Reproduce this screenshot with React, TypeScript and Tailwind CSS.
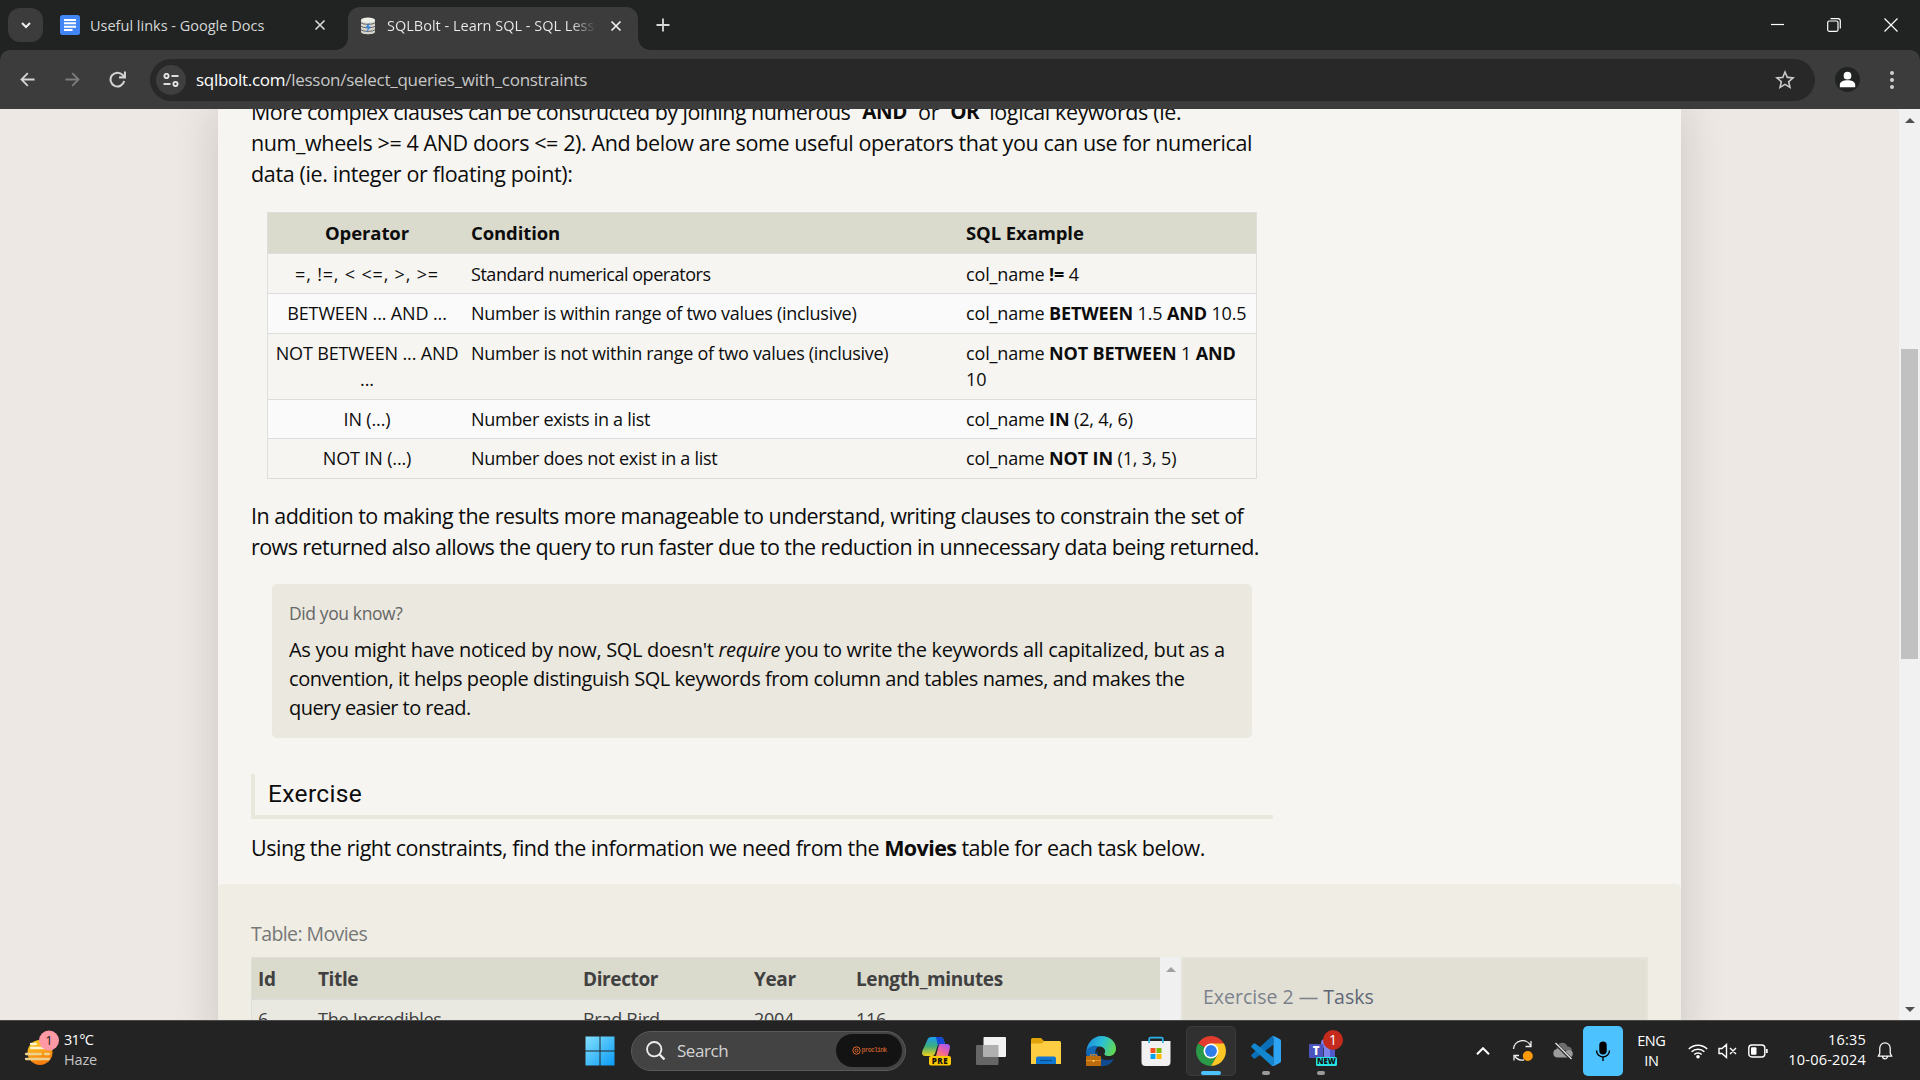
import React from "react";

type Cell = React.ReactNode;

const operators: { op: Cell; cond: Cell; ex: Cell; height: string }[] = [
  {
    op: <span className="tracking-[0.82px]">=, !=, &lt; &lt;=, &gt;, &gt;=</span>,
    cond: <span className="tracking-[-0.46px]">Standard numerical operators</span>,
    ex: (<>col_name <b>!=</b> 4</>),
    height: "h-[40px] pt-[7px]",
  },
  {
    op: "BETWEEN ... AND ...",
    cond: "Number is within range of two values (inclusive)",
    ex: (<>col_name <b>BETWEEN</b> 1.5 <b>AND</b> 10.5</>),
    height: "h-[40px] pt-[6px] bg-[#fafafa]",
  },
  {
    op: (<>NOT BETWEEN ... AND<br />...</>),
    cond: "Number is not within range of two values (inclusive)",
    ex: (<>col_name <b>NOT BETWEEN</b> 1 <b>AND</b><br />10</>),
    height: "h-[66px] pt-[6px]",
  },
  {
    op: "IN (...)",
    cond: "Number exists in a list",
    ex: (<>col_name <b>IN</b> (2, 4, 6)</>),
    height: "h-[39px] pt-[6px] bg-[#fafafa]",
  },
  {
    op: "NOT IN (...)",
    cond: "Number does not exist in a list",
    ex: (<>col_name <b>NOT IN</b> (1, 3, 5)</>),
    height: "h-[39px] pt-[6px]",
  },
];

function CloseGlyph({ className }: { className?: string }) {
  return (
    <svg viewBox="0 0 12 12" className={className} fill="none" stroke="currentColor" strokeWidth="1.7">
      <path d="M1.5 1.5l9 9M10.5 1.5l-9 9" />
    </svg>
  );
}

function TabStrip() {
  return (
    <div className="flex h-[50px] shrink-0 items-end bg-[#202322] text-[14.5px] text-[#d5d7d6]">
      <div className="mb-[8px] ml-[8px] flex h-[34px] w-[35px] items-center justify-center rounded-[12px] bg-[#3c3c3c]">
        <svg viewBox="0 0 12 12" className="size-[12px]" fill="none" stroke="#f0f0f0" strokeWidth="2">
          <path d="M2 4l4 4 4-4" />
        </svg>
      </div>
      <div className="ml-[17px] flex h-[50px] w-[276px] items-center">
        <svg viewBox="0 0 20 20" className="size-[20px]">
          <rect width="20" height="20" rx="2.5" fill="#4285f4" />
          <path d="M4 5h12M4 8.3h12M4 11.7h12M4 15h8.500" stroke="#fff" strokeWidth="2" />
        </svg>
        <span className="mt-px ml-[10px] flex-1 whitespace-nowrap">Useful links - Google Docs</span>
        <CloseGlyph className="mr-[10px] size-[12px] text-[#d5d7d6]" />
      </div>
      <div className="flex items-end">
        <div className="h-[12px] w-[12px] bg-[radial-gradient(circle_at_0_0,#202322_11.5px,#3c3c3c_12px)]" />
        <div className="flex h-[43px] w-[290px] items-center rounded-t-[12px] bg-[#3c3c3c] pb-[6px] text-[#eceeed]">
          <svg viewBox="0 0 16 18" className="ml-[12px] h-[18px] w-[16px]">
            <path d="M1 3v12c0 3 14 3 14 0V3z" fill="#d4d4cf" />
            <ellipse cx="8" cy="3.200" rx="7" ry="2.600" fill="#eeeee8" />
            <path d="M1 5.500c1 2.400 13 2.400 14 0M1 9c1 2.400 13 2.400 14 0M1 12.500c1 2.400 13 2.400 14 0" fill="none" stroke="#5a5f63" strokeWidth="1" />
            <path d="M9.500 5.500L5.500 10.500h2.500L6.500 15l4.500-5.500H8.500z" fill="#2a7fe0" />
          </svg>
          <span className="ml-[11px] w-[209px] overflow-hidden bg-[linear-gradient(90deg,#eceeed_88%,#3c3c3c)] bg-clip-text whitespace-nowrap text-transparent">
            SQLBolt - Learn SQL - SQL Lesson 2
          </span>
          <CloseGlyph className="ml-[14px] size-[12px] text-[#f0f0f0]" />
        </div>
        <div className="h-[12px] w-[12px] bg-[radial-gradient(circle_at_100%_0,#202322_11.5px,#3c3c3c_12px)]" />
      </div>
      <svg viewBox="0 0 14 14" className="mb-[18px] ml-[6px] size-[14px]" fill="none" stroke="#d8d8d8" strokeWidth="1.8">
        <path d="M7 0.500v13M0.500 7h13" />
      </svg>
      <div className="flex-1" />
      <div className="flex h-[50px] items-center gap-[43px] pr-[22px]">
        <svg viewBox="0 0 14 14" className="size-[14px]" stroke="#fff" strokeWidth="1.2"><path d="M1 6.500h13" /></svg>
        <svg viewBox="0 0 14 14" className="size-[14px]" fill="none" stroke="#fff" strokeWidth="1.2">
          <rect x="0.700" y="3" width="10.300" height="10.300" rx="1.500" />
          <path d="M3.500 0.700h7.500a2.300 2.300 0 0 1 2.300 2.300v7.500" />
        </svg>
        <svg viewBox="0 0 14 14" className="size-[14px]" fill="none" stroke="#fff" strokeWidth="1.2"><path d="M0.500 0.500l13 13M13.500 0.500l-13 13" /></svg>
      </div>
    </div>
  );
}

function Toolbar() {
  return (
    <div className="flex h-[59px] shrink-0 bg-[#202322]">
      <div className="flex w-full items-center rounded-t-[10px] bg-[#3c3c3c]">
        <svg viewBox="0 0 16 16" className="ml-[20px] size-[15px]" fill="none" stroke="#d4d4d4" strokeWidth="1.9"><path d="M15.500 8H1.800M8.300 1.300L1.600 8l6.700 6.700" /></svg>
        <svg viewBox="0 0 16 16" className="ml-[30px] size-[15px]" fill="none" stroke="#7d7d7d" strokeWidth="1.9"><path d="M0.500 8h13.700M7.700 1.300L14.400 8l-6.700 6.700" /></svg>
        <svg viewBox="0 0 16 16" className="ml-[29px] size-[17px]" fill="none" stroke="#d4d4d4" strokeWidth="1.9">
          <path d="M14.300 9.500A6.500 6.500 0 1 1 12.800 3.700L14.500 5.600" />
          <path d="M15 0.500V6H9.500" />
        </svg>
        <div className="ml-[24px] flex h-[42px] w-[1665px] items-center rounded-full bg-[#282828] pl-[6px]">
          <div className="flex size-[30px] items-center justify-center rounded-full bg-[#3f3f3f]">
            <svg viewBox="0 0 16 14" className="h-[14px] w-[16px]" fill="none" stroke="#e6e6e6" strokeWidth="1.9">
              <circle cx="3.500" cy="3" r="2.100" /><path d="M8.500 3h7" />
              <circle cx="12.500" cy="11" r="2.100" /><path d="M0.500 11h7" />
            </svg>
          </div>
          <div className="ml-[10px] flex-1 text-[17px] font-[370] tracking-[-0.28px] text-[#c7c7c7]">
            <span className="text-white">sqlbolt.com</span>/lesson/select_queries_with_constraints
          </div>
          <svg viewBox="0 0 24 24" className="mr-[18px] size-[24px]" fill="#c9c9c9">
            <path d="M22 9.240l-7.190-.62L12 2 9.190 8.630 2 9.240l5.460 4.730L5.820 21 12 17.270 18.180 21l-1.630-7.030L22 9.240zM12 15.400l-3.760 2.270 1-4.280-3.320-2.880 4.380-.38L12 6.100l1.710 4.040 4.380.38-3.320 2.880 1 4.280L12 15.400z" />
          </svg>
        </div>
        <svg viewBox="0 0 26 26" className="ml-[20px] size-[25px]">
          <circle cx="13" cy="13" r="13" fill="#202322" />
          <circle cx="13" cy="9" r="4" fill="#fff" />
          <path d="M5 21v-2.500c0-3.200 4-4.700 8-4.700s8 1.500 8 4.700V21z" fill="#fff" />
        </svg>
        <svg viewBox="0 0 4 20" className="ml-[30px] h-[20px] w-[4px]" fill="#cfcfcf">
          <circle cx="2" cy="3" r="2" /><circle cx="2" cy="10" r="2" /><circle cx="2" cy="17" r="2" />
        </svg>
      </div>
    </div>
  );
}

function OperatorTable() {
  return (
    <div className="mt-[23px] ml-[16px] w-[990px] border border-[#dedede] text-[18px] leading-[26px] font-[370] tracking-[-0.14px]">
      <div className="grid h-[41px] grid-cols-[198px_494px_1fr] items-center border-b border-[#dedede] bg-[#dadacd] text-[18.5px] font-bold tracking-[-0.1px]">
        <div className="text-center">Operator</div>
        <div className="pl-[5px]">Condition</div>
        <div className="pl-[6px]">SQL Example</div>
      </div>
      {operators.map((row, i) => (
        <div key={i} className={`grid grid-cols-[198px_494px_1fr] border-b border-[#dcdddd] whitespace-nowrap last:border-b-0 ${row.height}`}>
          <div className="text-center">{row.op}</div>
          <div className="pl-[5px] tracking-[-0.29px]">{row.cond}</div>
          <div className="pl-[6px]">{row.ex}</div>
        </div>
      ))}
    </div>
  );
}

function Lesson() {
  return (
    <div className="h-[940px] w-[1463px] shrink-0 bg-[#f6f5f1] shadow-[0_0_42px_rgba(40,20,20,0.16)]">
      <div className="flex h-[775px] flex-col pl-[33px] text-[21.5px] leading-[31.2px] font-[370] whitespace-nowrap text-[#0c0c0c]">
        <div className="-mt-[13px] h-[93px] shrink-0">
          <div className="flex">
            <span className="tracking-[-0.54px]">More complex clauses can be constructed by joining numerous</span>
            <b className="ml-[12px] text-[20.5px] tracking-[-0.4px]">AND</b>
            <span className="ml-[11px] tracking-[-0.3px]">or</span>
            <b className="ml-[11px] text-[20.5px] tracking-[-0.4px]">OR</b>
            <span className="ml-[10px] tracking-[-0.37px]">logical keywords (ie.</span>
          </div>
          <div className="tracking-[-0.4px]">num_wheels &gt;= 4 AND doors &lt;= 2). And below are some useful operators that you can use for numerical</div>
          <div className="tracking-[-0.35px]">data (ie. integer or floating point):</div>
        </div>
        <OperatorTable />
        <div className="mt-[21px]">
          <div className="tracking-[-0.51px]">In addition to making the results more manageable to understand, writing clauses to constrain the set of</div>
          <div className="tracking-[-0.57px]">rows returned also allows the query to run faster due to the reduction in unnecessary data being returned.</div>
        </div>
        <div className="mt-[22px] ml-[21px] h-[154px] w-[980px] shrink-0 rounded-[5px] bg-[#eae8df] pt-[15px] pl-[17px] text-[20px] leading-[29.200px]">
          <div className="mb-[6px] text-[17.5px] tracking-[-0.39px] text-[#666]">Did you know?</div>
          <div className="tracking-[-0.32px]">As you might have noticed by now, SQL doesn't <i>require</i> you to write the keywords all capitalized, but as a</div>
          <div className="tracking-[-0.44px]">convention, it helps people distinguish SQL keywords from column and tables names, and makes the</div>
          <div className="tracking-[-0.54px]">query easier to read.</div>
        </div>
        <div className="mt-[36px] h-[45px] w-[1022px] shrink-0 border-b-4 border-l-4 border-[#e8e8dc] pl-[13px] font-['Roboto'] text-[24.5px] leading-[40px] font-[380] tracking-[0.35px]">
          Exercise
        </div>
        <div className="mt-[13px] tracking-[-0.49px]">
          Using the right constraints, find the information we need from the <b className="tracking-[-0.6px]">Movies</b> table for each task below.
        </div>
      </div>
      <div className="h-[165px] rounded-t-[5px] bg-[#efede4] px-[33px] pt-[35px]">
        <div className="h-[38px] text-[19.5px] leading-[30px] font-[370] tracking-[-0.58px] text-[#777]">Table: Movies</div>
        <div className="flex">
          <div className="w-[909px] border border-r-0 border-[#dfdfda] text-[#404040]">
            <div className="grid h-[42px] grid-cols-[60px_265px_171px_102px_1fr] items-center border-b-2 border-[#dcdcd6] bg-[#dadacd] pt-[3px] pl-[6px] text-[19px] font-bold tracking-[-0.38px]">
              <span>Id</span><span>Title</span><span>Director</span><span>Year</span><span>Length_minutes</span>
            </div>
            <div className="grid h-[60px] grid-cols-[60px_265px_171px_102px_1fr] bg-[#e9e9e1] pt-[6px] pl-[6px] text-[18px] leading-[26px] font-[370] tracking-[-0.27px]">
              <span>6</span><span>The Incredibles</span><span>Brad Bird</span><span>2004</span><span>116</span>
            </div>
          </div>
          <div className="flex w-[21px] justify-center bg-[#f0f0f0] pt-[10px]">
            <svg viewBox="0 0 10 5" className="h-[5px] w-[10px]" fill="#a0a0a0"><path d="M0 5L5 0l5 5z" /></svg>
          </div>
          <div className="w-[467px] border-2 border-[#e5e4da] bg-[#e2e0d5] pt-[23px] pl-[20px] text-[19.5px] leading-[30px] font-[370] text-[#7c828d]">
            Exercise 2 — <span className="text-[#5f6675]">Tasks</span>
          </div>
        </div>
      </div>
    </div>
  );
}

function TaskIcons() {
  return (
    <div className="flex items-center">
      <div className="flex w-[55px] justify-center">
        <svg viewBox="0 0 30 30" className="size-[30px]">
          <defs>
            <linearGradient id="cpA" x1="0" y1="0" x2="0" y2="1"><stop offset="0" stopColor="#1c9cf0" /><stop offset="0.5" stopColor="#3fae7a" /><stop offset="1" stopColor="#f2d21b" /></linearGradient>
            <linearGradient id="cpB" x1="0.8" y1="0" x2="0.2" y2="1"><stop offset="0" stopColor="#a259f7" /><stop offset="0.6" stopColor="#f0609e" /><stop offset="1" stopColor="#fb8a5c" /></linearGradient>
          </defs>
          <path d="M7 2.500Q8 1 10 1h9.500q2.500 0 3.200 2.500L24 8h-5q-2 0-2.700 2.500L14 17.500q-.8 2.500-3 2.500H4.500Q0 20 1.300 15z" fill="url(#cpA)" />
          <path d="M15 1h4.500q2.500 0 3.200 2.500L24 8h-5q-1.500 0-2.200 1.500z" fill="#1549d8" />
          <path d="M19 8h6.500Q30 8 28.700 13l-1.900 7H15l2.500-9.500Q18 8 19 8z" fill="url(#cpB)" />
          <rect x="8" y="20" width="22" height="9.500" rx="2" fill="#fcc800" />
          <text x="19" y="27.700" textAnchor="middle" fontSize="8" fontWeight="800" fontFamily="Open Sans" letterSpacing="0.5" fill="#111">PRE</text>
        </svg>
      </div>
      <div className="flex w-[55px] justify-center">
        <svg viewBox="0 0 30 30" className="size-[30px]">
          <rect x="0" y="9" width="22.500" height="20" rx="1" fill="#666" />
          <rect x="7.500" y="1" width="22.500" height="20" rx="1" fill="#f2f2f2" />
          <rect x="7.500" y="9" width="15" height="12" fill="#b0b0b0" />
        </svg>
      </div>
      <div className="flex w-[55px] justify-center">
        <svg viewBox="0 0 30 30" className="size-[30px]">
          <path d="M0 3.500Q0 2 1.500 2h8.500l3.500 3.500V10H0z" fill="#e0a30a" />
          <path d="M0 7.500h10.500L13.500 5H28.500Q30 5 30 6.500V28H0z" fill="#ffcd42" />
          <path d="M5 28v-5.500q0-2 2-2h16q2 0 2 2V28z" fill="#0f77cf" />
          <path d="M9 24.500h12" stroke="#0a4f92" strokeWidth="1.200" />
        </svg>
      </div>
      <div className="flex w-[55px] justify-center">
        <svg viewBox="0 0 30 30" className="size-[30px]">
          <defs><linearGradient id="edA" x1="0" y1="0.3" x2="1" y2="0.6"><stop offset="0" stopColor="#1c8fdf" /><stop offset="0.5" stopColor="#2cc0d4" /><stop offset="1" stopColor="#63d94f" /></linearGradient></defs>
          <path d="M0.500 17C0 8 6.500 0 15.500 0 24 0 30 6 30 12.500c0 5-3.500 7.500-7 7.500-4 0-5-1.500-4.500-2.500 2-3-0.500-7-5-7C8 10.500 2 13 0.500 17z" fill="url(#edA)" />
          <path d="M0 16C1.500 10.500 8 8.500 12.500 10.500c-4 2-4 8-1 12 3.500 4.500 10 5.500 16 1C25 28 20 30 15.500 30 6 30 0 23.500 0 16z" fill="#1467b5" />
          <path d="M11.500 14c-1 4 2 9 8 10 3 .5 6-.3 8-.7C25 28 20 30 16 30c-6-3-8-9-4.500-16z" fill="#0f4a91" />
          <rect x="0" y="20" width="15" height="10" rx="0.800" fill="#bd6c0d" />
          <path d="M4.500 20v-1.200h6V20M0 24.500h15" fill="none" stroke="#e58f1e" />
          <circle cx="7.500" cy="25" r="1" fill="#ffd877" />
        </svg>
      </div>
      <div className="flex w-[55px] justify-center">
        <svg viewBox="0 0 30 30" className="size-[30px]">
          <path d="M0.500 5h29v21q0 4-4 4h-21q-4 0-4-4z" fill="#f1f1f1" />
          <path d="M8.200 7V3q0-1.300 1.300-1.300h11Q21.800 1.700 21.800 3v4" fill="none" stroke="#2bb3ea" strokeWidth="1.700" />
          <path d="M9.500 12h5v5h-5z" fill="#f25022" /><path d="M15.500 12h5v5h-5z" fill="#7fba00" />
          <path d="M9.500 18h5v5h-5z" fill="#00a4ef" /><path d="M15.500 18h5v5h-5z" fill="#ffb900" />
        </svg>
      </div>
      <div className="flex w-[55px] justify-center">
        <div className="flex h-[50px] w-[50px] flex-col items-center rounded-[5px] border border-[#3b3b3b] bg-[#303030] pt-[9px]">
          <svg viewBox="0 0 30 30" className="size-[30px] shrink-0">
            <path d="M15 15L2.010 7.500A15 15 0 0 1 27.990 7.500z" fill="#e33b2e" />
            <path d="M15 15H15L2.010 7.500A15 15 0 0 0 15 30L21.500 18.750z" fill="#2a9a48" />
            <path d="M15 7.500H27.990A15 15 0 0 1 15 30L21.500 18.750z" fill="#fcc625" />
            <circle cx="15" cy="15" r="7.500" fill="#fff" />
            <circle cx="15" cy="15" r="5.900" fill="#2f7de9" />
          </svg>
          <div className="mt-[5px] h-[4px] w-[20px] shrink-0 rounded-full bg-[#4cc2ff]" />
        </div>
      </div>
      <div className="flex w-[55px] flex-col items-center pt-[10px]">
        <svg viewBox="0 0 30 30" className="size-[30px]">
          <path d="M22.500 0v8.500L4.500 22.300q-1 .7-1.900 0L.7 20.600q-1-1 0-2L20.500 .6z" fill="#0a6fb8" />
          <path d="M22.500 30v-8.500L4.500 7.700q-1-.7-1.900 0L.7 9.400q-1 1 0 2L20.500 29.400z" fill="#1287d0" />
          <path d="M20.500 29.400q1.200.9 2.800.3l5.400-2.700q1.300-.7 1.300-2V5q0-1.300-1.300-2L23.300.3Q21.700-.3 20.500.6q2-.7 2 1.400v26q0 2-2 1.400z" fill="#2ca3f3" />
        </svg>
        <div className="mt-[5px] h-[4px] w-[8px] rounded-full bg-[#9a9a9a]" />
      </div>
      <div className="flex w-[55px] flex-col items-center pt-[4px]">
        <svg viewBox="0 0 36 36" className="ml-[10px] h-[36px] w-[36px]">
          <rect x="13" y="9" width="9" height="9" rx="4" fill="#7b83eb" />
          <path d="M16 14h11v10q0 6-6 6h-5z" fill="#7b83eb" />
          <path d="M22 14h5v14h-5z" fill="#5059c9" />
          <rect x="1" y="14" width="14.500" height="14" rx="1" fill="#4b53bc" />
          <text x="8.200" y="25" textAnchor="middle" fontSize="11.500" fontWeight="800" fontFamily="Open Sans" fill="#fff">T</text>
          <circle cx="25" cy="10" r="10" fill="#c42b1c" />
          <text x="25" y="15" textAnchor="middle" fontSize="14" fontFamily="Open Sans" fill="#fff">1</text>
          <rect x="8" y="27" width="21" height="9" rx="1.500" fill="#27e4e4" />
          <text x="18.500" y="34.300" textAnchor="middle" fontSize="7.800" fontWeight="800" fontFamily="Open Sans" fill="#111">NEW</text>
        </svg>
        <div className="mt-[5px] h-[4px] w-[8px] rounded-full bg-[#9a9a9a]" />
      </div>
    </div>
  );
}

function Taskbar() {
  return (
    <div className="flex h-[60px] shrink-0 items-center border-t border-[#4b4b4b] bg-[#232323] text-[14.5px] leading-[20px] text-white">
      <svg viewBox="0 0 36 36" className="-mt-[6px] ml-[24px] size-[36px]">
        <defs><linearGradient id="sun" x1="0" y1="0" x2="0.3" y2="1"><stop offset="0" stopColor="#ffd21f" /><stop offset="1" stopColor="#f57c10" /></linearGradient></defs>
        <circle cx="16" cy="22.500" r="12.500" fill="url(#sun)" />
        <path d="M7 14h5M7 18h15" stroke="#fff3cf" strokeWidth="2.300" strokeLinecap="round" />
        <path d="M2 24h15M21 24h4M2 29h23" stroke="#eed18f" strokeWidth="2.300" strokeLinecap="round" />
        <circle cx="25" cy="10.500" r="10" fill="#ff99a4" />
        <text x="25" y="15" textAnchor="middle" fontSize="13" fontFamily="Open Sans" fill="#222">1</text>
      </svg>
      <div className="-mt-[2px] ml-[4px] w-[522px]">
        <div className="tracking-[-0.7px]">31°C</div>
        <div className="tracking-[-0.17px] text-[#c4c4c4]">Haze</div>
      </div>
      <svg viewBox="0 0 30 30" className="-ml-[1px] size-[30px]">
        <defs><linearGradient id="win" x1="0" y1="0" x2="1" y2="1"><stop offset="0" stopColor="#83e0fd" /><stop offset="1" stopColor="#0a9bf5" /></linearGradient></defs>
        <path d="M.5 .5h14v14H.5zM15.500 .5h14v14h-14zM.5 15.500h14v14H.5zM15.500 15.500h14v14h-14z" fill="url(#win)" />
      </svg>
      <div className="ml-[16px] flex h-[40px] w-[275px] items-center rounded-full border border-[#5a5a5a] bg-[#434343] pr-[3px] pl-[14px]">
        <svg viewBox="0 0 18 18" className="size-[19px]" fill="none" stroke="#ececec" strokeWidth="1.800">
          <circle cx="7.800" cy="7.800" r="6.800" /><path d="M12.600 12.600L17.500 17.500" strokeWidth="2.200" />
        </svg>
        <span className="ml-[12px] flex-1 text-[17px] tracking-[-0.45px] text-[#d4d4d4]">Search</span>
        <span className="flex h-[33px] w-[66px] items-center justify-center gap-[1px] rounded-full bg-[#131313]">
          <svg viewBox="0 0 9 9" className="size-[9px]" fill="none" stroke="#e0672a">
            <circle cx="4.500" cy="4.500" r="3.700" strokeWidth="1" /><circle cx="4.500" cy="4.500" r="1.500" strokeWidth="1" />
          </svg>
          <span className="font-mono text-[6.500px] font-bold tracking-[-0.8px] text-[#b4552a]">proclink</span>
        </span>
      </div>
      <div className="ml-[2px] flex h-[60px] items-center"><TaskIcons /></div>
      <div className="flex-1" />
      <div className="flex h-[60px] items-center">
        <svg viewBox="0 0 14 8" className="mr-[22px] h-[8px] w-[14px]" fill="none" stroke="#fff" strokeWidth="2"><path d="M1 7.200l6-6 6 6" /></svg>
        <svg viewBox="0 0 22 22" className="mr-[18px] size-[22px]" fill="none" stroke="#eee" strokeWidth="1.300">
          <path d="M1.500 9A9 9 0 0 1 18.500 5.500M19 1v5.500h-5.500M12 20A9.500 9.500 0 0 1 3 16.500M2 20.500V15.500h5" />
          <circle cx="15.800" cy="16" r="5" fill="#ff9a0a" stroke="none" />
        </svg>
        <svg viewBox="0 0 22 18" className="mr-[9px] h-[18px] w-[22px]">
          <path d="M5 8a5.500 5.500 0 0 1 10.500-3.500q4 0 4.500 4H5z" fill="#6d6d6d" />
          <path d="M5 15.500a4.300 4.300 0 0 1 0-8.500q3-.5 6 1.500l2 1q1-1.500 4-1.500a3.700 3.700 0 0 1 0 7.500z" fill="#9c9c9c" />
          <path d="M3.500 1.500L19.500 17.500" stroke="#232323" strokeWidth="3" /><path d="M3.500 1L19.500 17" stroke="#e8e8e8" strokeWidth="1.200" />
        </svg>
        <div className="flex h-[50px] w-[40px] items-center justify-center rounded-[5px] bg-[#4cc2ff]">
          <svg viewBox="0 0 16 20" className="h-[20px] w-[16px]" fill="none" stroke="#000" strokeWidth="1.400">
            <rect x="4.300" y="0.500" width="7.400" height="13" rx="3.700" fill="#000" stroke="none" />
            <path d="M1.500 9.500a6.500 6.500 0 0 0 13 0M8 16v4" />
          </svg>
        </div>
        <div className="w-[56px] text-center tracking-[-0.4px]">ENG<br />IN</div>
        <svg viewBox="0 0 20 16" className="ml-[9px] h-[16px] w-[20px]" fill="none" stroke="#fff" strokeWidth="1.500">
          <path d="M0.800 6a13 13 0 0 1 18.400 0M3.600 8.800a9 9 0 0 1 12.800 0M6.300 11.500a5.300 5.300 0 0 1 7.400 0" />
          <circle cx="10" cy="13.800" r="1.800" fill="#fff" stroke="none" />
        </svg>
        <svg viewBox="0 0 20 16" className="ml-[10px] h-[16px] w-[20px]" fill="none" stroke="#fff" strokeWidth="1.400">
          <path d="M1 5.500h3L8.500 1.500v13L4 10.500H1zM12 5l6 6M18 5l-6 6" />
        </svg>
        <svg viewBox="0 0 20 14" className="ml-[10px] h-[14px] w-[20px]" fill="none" stroke="#fff" strokeWidth="1.400">
          <rect x="0.800" y="1" width="16" height="12" rx="3" /><path d="M18.800 5v4" strokeWidth="1.800" />
          <rect x="3" y="3.200" width="5.500" height="7.600" rx="1" fill="#fff" stroke="none" />
        </svg>
        <div className="-mt-[2px] ml-[20px] text-right tracking-[0.2px]">16:35<br />10-06-2024</div>
        <svg viewBox="0 0 16 20" className="mr-[27px] ml-[11px] h-[19px] w-[16px]" fill="none" stroke="#fff" strokeWidth="1.300">
          <path d="M2.500 13V7.500a5.500 5.500 0 0 1 11 0V13l1.500 3H1zM5.500 16.200a2.500 2.500 0 0 0 5 0" />
        </svg>
      </div>
    </div>
  );
}

export default function App() {
  return (
    <div className="flex h-[1080px] w-[1920px] flex-col overflow-hidden font-['Open_Sans','Noto_Sans',sans-serif]">
      <TabStrip />
      <Toolbar />
      <div className="flex min-h-0 flex-1 overflow-hidden">
        <div className="flex flex-1 justify-center overflow-hidden bg-[#ede8e4]">
          <Lesson />
        </div>
        <div className="flex w-[21px] flex-col items-center bg-[#f1f1f1] pt-[9px] pb-[8px]">
          <svg viewBox="0 0 10 5" className="h-[5px] w-[10px]" fill="#505050"><path d="M0 5L5 0l5 5z" /></svg>
          <div className="mt-[226px] h-[310px] w-[17px] bg-[#c1c1c1]" />
          <div className="flex-1" />
          <svg viewBox="0 0 10 5" className="h-[5px] w-[10px]" fill="#505050"><path d="M0 0l5 5 5-5z" /></svg>
        </div>
      </div>
      <Taskbar />
    </div>
  );
}
